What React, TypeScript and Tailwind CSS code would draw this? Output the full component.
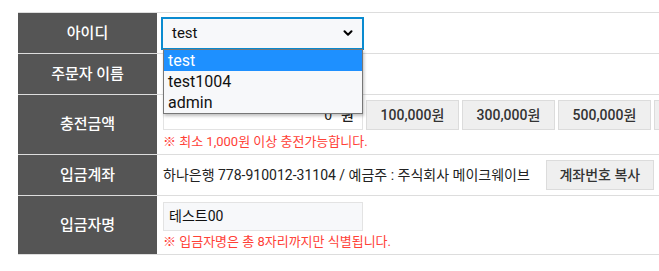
import { ChevronDown } from 'lucide-react';

const font = "font-['Roboto','Noto_Sans_CJK_KR',sans-serif]";

function Label({ children }: { children: React.ReactNode }) {
  return (
    <div className="w-[139px] shrink-0 bg-[#555555] text-white text-[15px] font-medium flex items-center justify-center">
      {children}
    </div>
  );
}

export default function App() {
  const amounts = ['100,000원', '300,000원', '500,000원', '1,000,000원'];

  return (
    <div className={`w-[659px] h-[271px] overflow-hidden bg-white ${font}`}>
      <div className="pt-[12px] pl-[18px] w-[760px]">
        {/* 아이디 */}
        <div className="flex h-[41px] border-t border-[#dddddd]">
          <Label>아이디</Label>
          <div className="flex-1 flex items-center pl-[4px] relative">
            <div className="w-[203px] h-[33px] border-2 border-[#0a8bd0] bg-[#f7f8fa] flex items-center justify-between pl-[9px] pr-[7px] text-[15px] text-[#111]">
              <span>test</span>
              <ChevronDown size={14} strokeWidth={3.5} className="text-black" />
            </div>
            {/* open select menu */}
            <div className="absolute left-[6px] top-[36px] w-[200px] z-10 bg-[#f7f8fa] border border-[#777] shadow-[1px_2px_3px_rgba(0,0,0,0.25)] text-[16px] text-[#111]">
              <div className="h-[21px] bg-[#1e90ff] text-white flex items-center pl-[4px]">test</div>
              <div className="h-[21px] flex items-center pl-[4px]">test1004</div>
              <div className="h-[21px] flex items-center pl-[4px]">admin</div>
            </div>
          </div>
        </div>

        {/* 주문자 이름 */}
        <div className="flex h-[41px] border-t border-[#dddddd]">
          <Label>주문자 이름</Label>
          <div className="flex-1" />
        </div>

        {/* 충전금액 */}
        <div className="flex h-[60px] border-t border-[#dddddd]">
          <Label>충전금액</Label>
          <div className="flex-1 pl-[6px] pt-[5px]">
            <div className="flex gap-[3px]">
              <div className="w-[200px] h-[30px] border border-[#e3e3e3] bg-white flex items-center justify-end pr-[8px] gap-[9px] text-[14px] text-[#222]">
                <span>0</span>
                <span className="font-medium">원</span>
              </div>
              {amounts.map((a) => (
                <button
                  key={a}
                  className="w-[93px] h-[30px] shrink-0 bg-[#efefef] border border-[#dcdcdc] text-[14px] font-medium text-[#333]"
                >
                  {a}
                </button>
              ))}
            </div>
            <p className="mt-[2px] text-[13px] text-[#ff4137] leading-[20px]">※ 최소 1,000원 이상 충전가능합니다.</p>
          </div>
        </div>

        {/* 입금계좌 */}
        <div className="flex h-[41px] border-t border-[#dddddd]">
          <Label>입금계좌</Label>
          <div className="flex-1 flex items-center pl-[6px] gap-[16px] text-[14px] text-[#222]">
            <span>하나은행 778-910012-31104 / 예금주 : 주식회사 메이크웨이브</span>
            <button className="w-[108px] h-[30px] bg-[#efefef] border border-[#dcdcdc] text-[14px] font-medium text-[#333]">
              계좌번호 복사
            </button>
          </div>
        </div>

        {/* 입금자명 */}
        <div className="flex h-[60px] border-t border-b border-[#dddddd]">
          <Label>입금자명</Label>
          <div className="flex-1 pl-[6px] pt-[6px]">
            <div className="w-[200px] h-[29px] border border-[#e3e3e3] bg-[#f7f8fa] flex items-center pl-[5px] text-[14px] text-[#111]">
              테스트00
            </div>
            <p className="mt-[1px] text-[13px] text-[#ff4137] leading-[20px]">※ 입금자명은 총 8자리까지만 식별됩니다.</p>
          </div>
        </div>
      </div>
    </div>
  );
}
